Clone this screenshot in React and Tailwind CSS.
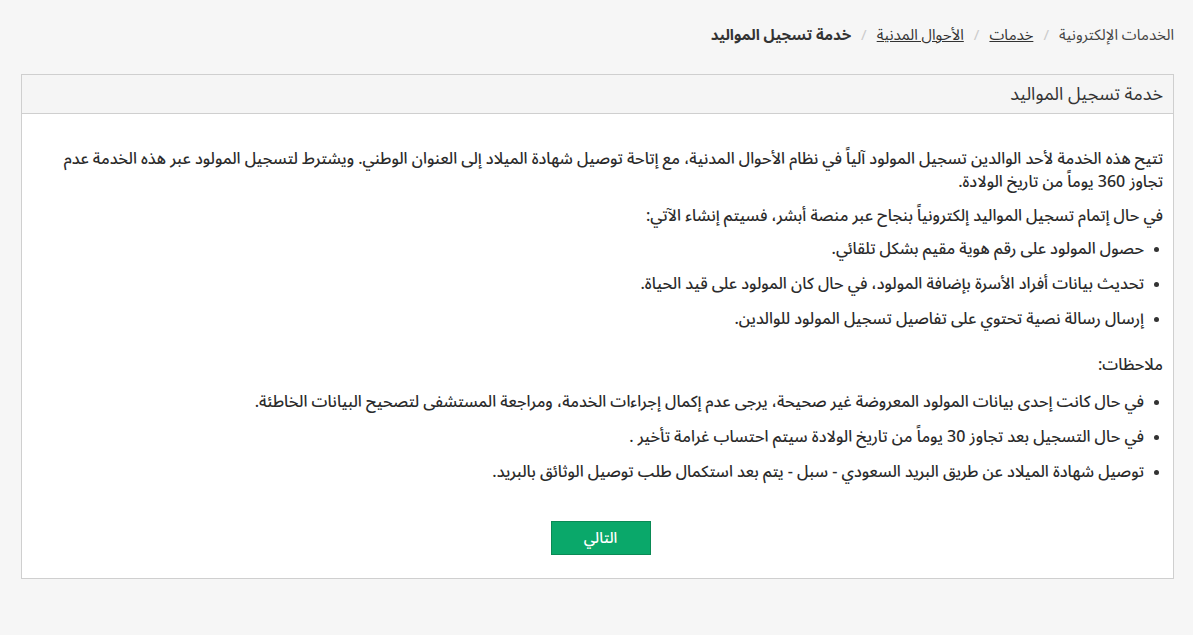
export default function App() {
  const font = { fontFamily: '"Noto Sans Arabic", "DejaVu Sans", "Noto Sans", sans-serif' };
  const items1 = [
    "حصول المولود على رقم هوية مقيم بشكل تلقائي.",
    "تحديث بيانات أفراد الأسرة بإضافة المولود، في حال كان المولود على قيد الحياة.",
    "إرسال رسالة نصية تحتوي على تفاصيل تسجيل المولود للوالدين.",
  ];
  const items2 = [
    "في حال كانت إحدى بيانات المولود المعروضة غير صحيحة، يرجى عدم إكمال إجراءات الخدمة، ومراجعة المستشفى لتصحيح البيانات الخاطئة.",
    "في حال التسجيل بعد تجاوز 30 يوماً من تاريخ الولادة سيتم احتساب غرامة تأخير .",
    "توصيل شهادة الميلاد عن طريق البريد السعودي - سبل - يتم بعد استكمال طلب توصيل الوثائق بالبريد.",
  ];

  return (
    <div dir="rtl" className="min-h-[635px] bg-[#f6f6f6] text-[#333] pt-[23px] pr-[19px] pl-[21px]" style={font}>
      <nav className="flex items-center gap-[10px] text-[15px] h-[24px]">
        <span className="text-[#444]">الخدمات الإلكترونية</span>
        <span className="text-[#ccc]">/</span>
        <a className="underline text-[#333]">خدمات</a>
        <span className="text-[#ccc]">/</span>
        <a className="underline text-[#333]">الأحوال المدنية</a>
        <span className="text-[#ccc]">/</span>
        <span className="font-bold text-[#333]">خدمة تسجيل المواليد</span>
      </nav>

      <div className="mt-[27px] border border-[#cfcfcf] bg-white">
        <div className="h-[39px] bg-[#f5f5f5] border-b border-[#cfcfcf] flex items-center px-[10px] text-[18px] text-[#333]">
          خدمة تسجيل المواليد
        </div>
        <div className="px-[10px] pt-[34px] pb-[23px] text-[16px] font-medium text-[#2b2b2b]">
          <p className="leading-[23px]">
            تتيح هذه الخدمة لأحد الوالدين تسجيل المولود آلياً في نظام الأحوال المدنية، مع إتاحة توصيل شهادة الميلاد إلى العنوان الوطني. ويشترط لتسجيل المولود عبر هذه الخدمة عدم تجاوز 360 يوماً من تاريخ الولادة.
          </p>
          <p className="mt-[11px] leading-[23px]">
            في حال إتمام تسجيل المواليد إلكترونياً بنجاح عبر منصة أبشر، فسيتم إنشاء الآتي:
          </p>
          <ul className="mt-[10px] flex flex-col gap-[12px]">
            {items1.map((t) => (
              <li key={t} className="flex items-center gap-[10px] leading-[23px] pr-[4px]">
                <span className="w-[5px] h-[5px] rounded-full bg-[#333] shrink-0" />
                <span>{t}</span>
              </li>
            ))}
          </ul>
          <p className="mt-[23px] leading-[23px]">ملاحظات:</p>
          <ul className="mt-[14px] flex flex-col gap-[12px]">
            {items2.map((t) => (
              <li key={t} className="flex items-center gap-[10px] leading-[23px] pr-[4px]">
                <span className="w-[5px] h-[5px] rounded-full bg-[#333] shrink-0" />
                <span>{t}</span>
              </li>
            ))}
          </ul>
          <div className="mt-[37px] flex justify-center pl-[6px]">
            <button className="w-[100px] h-[34px] bg-[#0aa86a] border border-[#0a8a55] text-white text-[15px]">
              التالي
            </button>
          </div>
        </div>
      </div>
    </div>
  );
}
